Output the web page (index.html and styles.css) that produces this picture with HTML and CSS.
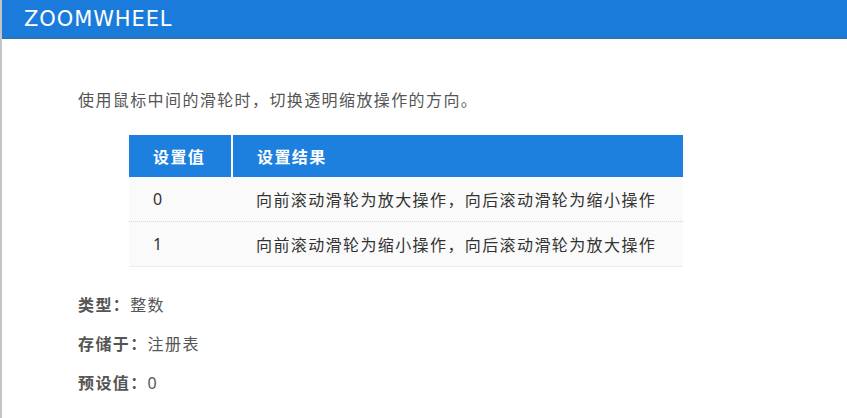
FILE: index.html
```html
<!DOCTYPE html>
<html lang="zh-CN">
<head>
<meta charset="utf-8">
<title>ZOOMWHEEL</title>
<link rel="stylesheet" href="styles.css">
</head>
<body>
<div class="page">
  <header class="topbar"><h1 class="title">ZOOMWHEEL</h1></header>
  <main class="content">
    <p class="desc">使用鼠标中间的滑轮时，切换透明缩放操作的方向。</p>
    <table class="values">
      <thead>
        <tr><th class="col-val">设置值</th><th class="col-res">设置结果</th></tr>
      </thead>
      <tbody>
        <tr><td class="num">0</td><td>向前滚动滑轮为放大操作，向后滚动滑轮为缩小操作</td></tr>
        <tr><td class="num">1</td><td>向前滚动滑轮为缩小操作，向后滚动滑轮为放大操作</td></tr>
      </tbody>
    </table>
    <ul class="props">
      <li><b>类型：</b>整数</li>
      <li><b>存储于：</b>注册表</li>
      <li><b>预设值：</b><span class="num">0</span></li>
    </ul>
  </main>
</div>
</body>
</html>
```
FILE: styles.css
```css
html, body {
  margin: 0;
  padding: 0;
  background: #fff;
}
body {
  font-family: "Noto Sans CJK SC", "Noto Sans", sans-serif;
  color: #555;
}
.page {
  min-height: 418px;
  border-left: 2px solid #c4c4c4;
  box-sizing: border-box;
}
.topbar {
  height: 37px;
  background: #1a7bdb;
  border-bottom: 2px solid #2d74b4;
  display: flex;
  align-items: center;
  padding-left: 22px;
}
.title {
  margin: 0;
  font-family: "DejaVu Sans", Verdana, sans-serif;
  font-weight: normal;
  font-size: 21px;
  color: #fff;
  letter-spacing: 0.9px;
}
.content {
  padding: 48px 0 0 76px;
}
.desc {
  margin: 0;
  font-size: 16px;
  letter-spacing: 1.4px;
  line-height: 24px;
  color: #555;
}
.values {
  margin: 24px 0 0 51px;
  width: 554px;
  border-collapse: collapse;
  font-size: 16px;
  letter-spacing: 1.4px;
}
.values th {
  background: #1e80de;
  color: #fff;
  font-weight: bold;
  text-align: left;
  height: 42px;
  padding: 0 0 0 24px;
}
.values th.col-val {
  width: 78px;
  border-right: 2px solid #fff;
}
.values td {
  background: #fafafa;
  color: #333;
  height: 44px;
  padding: 0 0 0 24px;
  border-bottom: 1px dotted #d6d6d6;
}
.values tbody tr:last-child td {
  border-bottom: 1px solid #ececec;
}
.num {
  font-family: "Noto Sans", sans-serif;
  letter-spacing: 0;
}
.props {
  list-style: none;
  margin: 25px 0 0 0;
  padding: 0;
  font-size: 16px;
  letter-spacing: 1.4px;
  color: #555;
}
.props li {
  height: 39px;
  line-height: 24px;
}
.props b {
  color: #555;
}
```
